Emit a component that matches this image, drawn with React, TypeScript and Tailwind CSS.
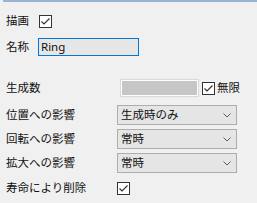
const font = { fontFamily: '"Noto Sans", "Noto Sans CJK JP", sans-serif' };

function Check() {
  return (
    <div className="flex h-[13px] w-[13px] items-center justify-center border border-[#333333] bg-white">
      <svg width="11" height="11" viewBox="0 0 11 11">
        <path d="M1.5 5.5 L4 8 L9.5 2.5" fill="none" stroke="#333333" strokeWidth="1.2" />
      </svg>
    </div>
  );
}

function Select({ value }: { value: string }) {
  return (
    <div className="flex h-[20px] w-[120px] items-center justify-between border border-[#adadad] bg-[#e5e5e5] pl-[3px] pr-[5px]">
      <span className="leading-none">{value}</span>
      <svg width="8" height="5" viewBox="0 0 8 5">
        <path d="M0.5 0.5 L4 4 L7.5 0.5" fill="none" stroke="#606060" strokeWidth="1" />
      </svg>
    </div>
  );
}

function Row({ label, children, cls }: { label: string; children: React.ReactNode; cls: string }) {
  return (
    <div className={`flex items-center ${cls}`}>
      <div className="w-[111px] shrink-0">{label}</div>
      {children}
    </div>
  );
}

export default function App() {
  return (
    <div className="h-[203px] w-[257px] bg-[#f0f0f0] text-[11.5px] text-[#111111]" style={font}>
      <div className="ml-[3px] h-[2px] bg-[#99b4d1]" />
      <div className="pl-[6px]">
        <div className="mt-[12px] flex h-[14px] items-center">
          <div className="w-[33px] shrink-0">描画</div>
          <Check />
        </div>
        <div className="mt-[10px] flex h-[18px] items-center">
          <div className="w-[32px] shrink-0">名称</div>
          <div className="flex h-[18px] w-[101px] items-center border border-[#0078d7] bg-[#e6e6e6] pl-[2px] leading-none">
            Ring
          </div>
        </div>
        <div className="mt-[23px] flex h-[18px] items-center">
          <div className="w-[114px] shrink-0">生成数</div>
          <div className="h-[18px] w-[79px] border border-[#d9d9d9]">
            <div className="h-full w-full border border-white bg-[#c6c6c6]" />
          </div>
          <div className="ml-[3px]">
            <Check />
          </div>
          <span className="ml-[2px]">無限</span>
        </div>
        <Row label="位置への影響" cls="mt-[8px] h-[20px]">
          <Select value="生成時のみ" />
        </Row>
        <Row label="回転への影響" cls="mt-[4px] h-[20px]">
          <Select value="常時" />
        </Row>
        <Row label="拡大への影響" cls="mt-[4px] h-[20px]">
          <Select value="常時" />
        </Row>
        <Row label="寿命により削除" cls="mt-[8px] h-[14px]">
          <Check />
        </Row>
      </div>
    </div>
  );
}
